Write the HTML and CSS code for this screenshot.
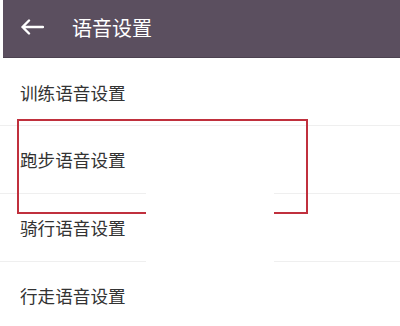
FILE: index.html
```html
<!DOCTYPE html>
<html lang="zh-CN">
<head>
<meta charset="utf-8">
<title>语音设置</title>
<link rel="stylesheet" href="styles.css">
</head>
<body>
<div class="page">
  <header class="topbar">
    <svg class="back" width="24" height="16" viewBox="0 0 24 16" aria-hidden="true">
      <path d="M23 8H2.5M9 1.5L2.5 8L9 14.5" fill="none" stroke="#ffffff" stroke-width="2.4" stroke-linecap="round" stroke-linejoin="round"/>
    </svg>
    <h1 class="title">语音设置</h1>
  </header>
  <ul class="list">
    <li class="row">训练语音设置</li>
    <li class="row">跑步语音设置</li>
    <li class="row">骑行语音设置</li>
    <li class="row">行走语音设置</li>
  </ul>
  <div class="mask"></div>
  <div class="highlight"></div>
</div>
</body>
</html>
```

FILE: styles.css
```css
html, body {
  margin: 0;
  padding: 0;
  background: #ffffff;
}
body {
  font-family: "Noto Sans CJK SC", "Noto Sans", sans-serif;
  width: 400px;
  height: 326px;
  overflow: hidden;
}
.page {
  position: relative;
  width: 400px;
  height: 326px;
}
.topbar {
  margin-left: 3px;
  height: 57px;
  background: #5b4f5f;
  border-bottom: 1px solid #4c4250;
  display: flex;
  align-items: center;
}
.back {
  margin-left: 17px;
  margin-top: -3px;
}
.title {
  margin: -3px 0 0 28px;
  font-size: 20px;
  font-weight: 400;
  color: #ffffff;
  letter-spacing: 0;
}
.list {
  list-style: none;
  margin: 0;
  padding: 0;
}
.row {
  height: 67px;
  border-bottom: 1px solid #efefef;
  padding-left: 20px;
  display: flex;
  align-items: center;
  font-size: 17.6px;
  color: #333333;
}
.row:first-child {
  padding-top: 2px;
  height: 65px;
}
.mask {
  position: absolute;
  left: 146px;
  top: 186px;
  width: 128px;
  height: 140px;
  background: #ffffff;
  z-index: 2;
}
.highlight {
  position: absolute;
  left: 17px;
  top: 119px;
  width: 287px;
  height: 91px;
  border: 2px solid #c0303d;
  z-index: 1;
}
```
